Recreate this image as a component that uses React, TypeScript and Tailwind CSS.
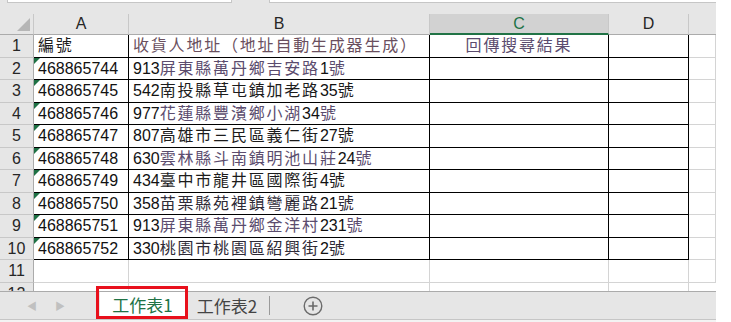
import React from "react";

type Row = { id: string; addr: string; tone: "light" | "dark" | "mid" };

const rows: Row[] = [
  { id: "468865744", addr: "913屏東縣萬丹鄉吉安路1號", tone: "light" },
  { id: "468865745", addr: "542南投縣草屯鎮加老路35號", tone: "dark" },
  { id: "468865746", addr: "977花蓮縣豐濱鄉小湖34號", tone: "light" },
  { id: "468865747", addr: "807高雄市三民區義仁街27號", tone: "dark" },
  { id: "468865748", addr: "630雲林縣斗南鎮明池山莊24號", tone: "light" },
  { id: "468865749", addr: "434臺中市龍井區國際街4號", tone: "dark" },
  { id: "468865750", addr: "358苗栗縣苑裡鎮彎麗路21號", tone: "mid" },
  { id: "468865751", addr: "913屏東縣萬丹鄉金洋村231號", tone: "light" },
  { id: "468865752", addr: "330桃園市桃園區紹興街2號", tone: "mid" },
];

// row heights, rows 1..11 (Excel zoom makes them alternate 23/22)
const heights = ["h-[23px]", "h-[22px]", "h-[23px]", "h-[22px]", "h-[23px]", "h-[22px]", "h-[23px]", "h-[22px]", "h-[23px]", "h-[22px]", "h-[23px]"];

const toneClass = {
  light: "text-[#5b4c6e]",
  dark: "text-[#1c1c1c]",
  mid: "text-[#2e2a36]",
};

// CJK runs get a bit of tracking so they take the width of the sheet font;
// only the CJK glyphs render thin/coloured in the reference, digits stay black
function Mixed({ text, cjk }: { text: string; cjk: string }) {
  const parts = text.split(/([\u3000-\u9fff\uff00-\uffef]+)/);
  return (
    <>
      {parts.map((p, i) =>
        /[\u3000-\u9fff\uff00-\uffef]/.test(p) ? (
          <span key={i} className={`tracking-[1.8px] ${cjk}`}>{p}</span>
        ) : (
          <span key={i} className="text-[#111]">{p}</span>
        )
      )}
    </>
  );
}

function RowHead({ n, h }: { n: number; h: string }) {
  return (
    <div className={`${h} w-[34px] shrink-0 bg-[#e6e6e6] border-r border-b border-r-[#ababab] border-b-[#c8c8c8] flex items-center justify-center text-[16px] text-[#262626]`}>
      {n}
    </div>
  );
}

function Cell({ w, h, black, children, className = "" }: { w: string; h: string; black?: boolean; children?: React.ReactNode; className?: string }) {
  return (
    <div
      className={[
        w,
        h,
        "shrink-0 border-r border-b flex items-center overflow-hidden whitespace-nowrap relative",
        black ? "border-black" : "border-[#d4d4d4]",
        className,
      ].join(" ")}
    >
      {children}
    </div>
  );
}

function Flag() {
  return (
    <div className="absolute left-0 top-0 w-0 h-0 border-t-[6px] border-r-[6px] border-t-[#1e7145] border-r-transparent" />
  );
}

export default function App() {
  return (
    <div className="w-[731px] h-[322px] overflow-hidden bg-white flex font-['Liberation_Sans','Noto_Sans_CJK_TC',sans-serif] text-[16px] leading-none">
      <div className="w-[716px] shrink-0 flex flex-col">
        {/* name box / formula bar edges */}
        <div className="h-[14px] bg-[#e6e6e6] flex items-start">
          <div className="ml-[7px] w-[225px] h-[3px] bg-white border-x border-b border-[#c6c6c6]" />
          <div className="ml-[37px] flex-1 h-[3px] bg-white border-l border-b border-[#c6c6c6]" />
        </div>

        {/* column headers */}
        <div className="h-[21px] flex bg-[#e6e6e6] text-[#262626]">
          <div className="w-[34px] shrink-0 border-r border-b border-r-[#c8c8c8] border-b-[#ababab] relative">
            <svg className="absolute right-[3px] bottom-[3px]" width="13" height="13" viewBox="0 0 13 13">
              <path d="M13 0 L13 13 L0 13 Z" fill="#b6b6b6" />
            </svg>
          </div>
          <div className="w-[95px] shrink-0 border-r border-b border-r-[#c8c8c8] border-b-[#ababab] flex items-center justify-center">A</div>
          <div className="w-[301px] shrink-0 border-r border-b border-r-[#c8c8c8] border-b-[#ababab] flex items-center justify-center">B</div>
          <div className="w-[179px] shrink-0 border-r border-b-2 border-r-[#c8c8c8] border-b-[#217346] bg-[#d2d2d2] text-[#217346] flex items-center justify-center">C</div>
          <div className="w-[80px] shrink-0 border-r border-b border-r-[#c8c8c8] border-b-[#ababab] flex items-center justify-center">D</div>
          <div className="flex-1 border-b border-b-[#ababab]" />
        </div>

        {/* row 1: titles */}
        <div className="flex">
          <RowHead n={1} h={heights[0]} />
          <Cell w="w-[95px]" h={heights[0]} black className="pl-[4px]">
            <Mixed text="編號" cjk="text-[#1c1c1c]" />
          </Cell>
          <Cell w="w-[301px]" h={heights[0]} black className="pl-[4px]">
            <Mixed text="收貨人地址（地址自動生成器生成）" cjk="text-[#6a4f5e]" />
          </Cell>
          <Cell w="w-[179px]" h={heights[0]} black className="justify-center">
            <Mixed text="回傳搜尋結果" cjk={toneClass.light} />
          </Cell>
          <Cell w="w-[80px]" h={heights[0]} black />
          <Cell w="flex-1" h={heights[0]} />
        </div>

        {rows.map((r, i) => {
          const h = heights[i + 1];
          return (
            <div key={r.id} className="flex">
              <RowHead n={i + 2} h={h} />
              <Cell w="w-[95px]" h={h} black className="pl-[4px] text-[#111]">
                <Flag />
                {r.id}
              </Cell>
              <Cell w="w-[301px]" h={h} black className="pl-[4px]">
                <Mixed text={r.addr} cjk={toneClass[r.tone]} />
              </Cell>
              <Cell w="w-[179px]" h={h} black />
              <Cell w="w-[80px]" h={h} black />
              <Cell w="flex-1" h={h} />
            </div>
          );
        })}

        {/* row 11 */}
        <div className="flex">
          <RowHead n={11} h={heights[10]} />
          <Cell w="w-[95px]" h={heights[10]} />
          <Cell w="w-[301px]" h={heights[10]} />
          <Cell w="w-[179px]" h={heights[10]} />
          <Cell w="w-[80px]" h={heights[10]} />
          <Cell w="flex-1" h={heights[10]} />
        </div>

        {/* row 12, cut off by the sheet tabs */}
        <div className="flex h-[8px] overflow-hidden items-start">
          <div className="h-[22px] w-[34px] shrink-0 bg-[#e6e6e6] border-r border-r-[#ababab] flex items-center justify-center text-[16px] text-[#262626]">12</div>
          <div className="h-[8px] w-[95px] shrink-0 border-r border-[#d4d4d4]" />
          <div className="h-[8px] w-[301px] shrink-0 border-r border-[#d4d4d4]" />
          <div className="h-[8px] w-[179px] shrink-0 border-r border-[#d4d4d4]" />
          <div className="h-[8px] w-[80px] shrink-0 border-r border-[#d4d4d4]" />
        </div>

        {/* sheet tabs */}
        <div className="h-[28px] bg-[#e6e6e6] border-t border-[#ababab] flex items-stretch font-['Noto_Sans_CJK_TC','Liberation_Sans',sans-serif]">
          <div className="w-[100px] shrink-0 flex items-center text-[#c0c0c0] text-[10px]">
            <span className="ml-[27px]">◀</span>
            <span className="ml-[18px]">▶</span>
          </div>
          <div className="relative w-[85px] shrink-0 bg-white border-b-[3px] border-[#217346] flex items-center justify-center text-[#217346] text-[17px]">
            工作表1
            <div className="absolute -left-[4px] -right-[3px] -top-[6px] -bottom-[3px] border-[3px] border-[#e8101c]" />
          </div>
          <div className="w-[84px] shrink-0 flex items-center justify-center text-[#444] text-[17px]">工作表2</div>
          <div className="w-px h-[19px] self-center bg-[#9a9a9a]" />
          <div className="ml-[33px] self-center">
            <svg width="20" height="20" viewBox="0 0 20 20">
              <circle cx="10" cy="10" r="8.8" fill="none" stroke="#6b6b6b" strokeWidth="1.4" />
              <path d="M10 5.5 V14.5 M5.5 10 H14.5" stroke="#6b6b6b" strokeWidth="1.6" />
            </svg>
          </div>
        </div>
        <div className="h-[3px] bg-[#f3f3f3] border-t border-[#c6c6c6]" />
      </div>
      <div className="flex-1 bg-white" />
    </div>
  );
}
